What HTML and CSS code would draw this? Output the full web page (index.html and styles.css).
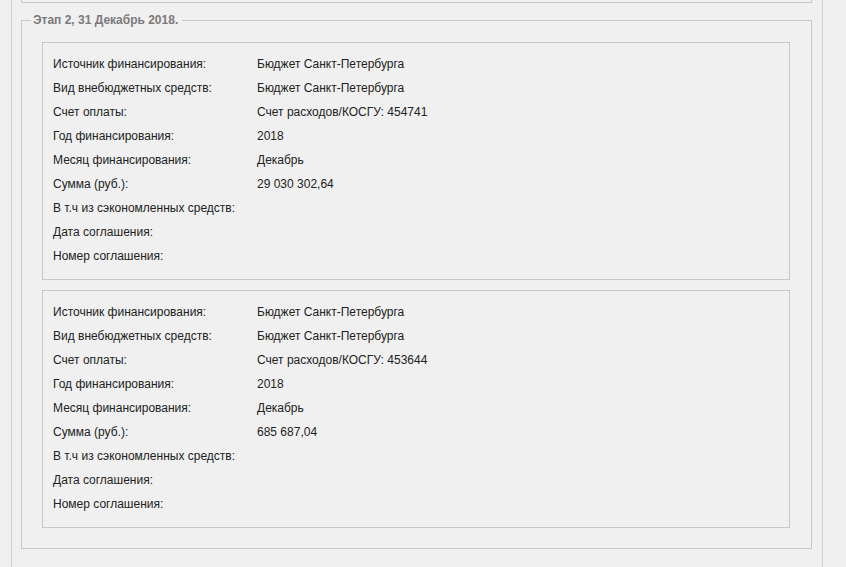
FILE: index.html
```html
<!DOCTYPE html>
<html>
<head>
<meta charset="utf-8">
<link rel="stylesheet" href="styles.css">
</head>
<body>
<div class="page">
  <div class="prev"></div>
  <div class="stage">
    <span class="legend">Этап 2, 31 Декабрь 2018.</span>
    <div class="card">
      <div class="row"><span class="lbl">Источник финансирования:</span><span class="val">Бюджет Санкт-Петербурга</span></div>
      <div class="row"><span class="lbl">Вид внебюджетных средств:</span><span class="val">Бюджет Санкт-Петербурга</span></div>
      <div class="row"><span class="lbl">Счет оплаты:</span><span class="val">Счет расходов/КОСГУ: 454741</span></div>
      <div class="row"><span class="lbl">Год финансирования:</span><span class="val">2018</span></div>
      <div class="row"><span class="lbl">Месяц финансирования:</span><span class="val">Декабрь</span></div>
      <div class="row"><span class="lbl">Сумма (руб.):</span><span class="val">29 030 302,64</span></div>
      <div class="row"><span class="lbl">В т.ч из сэкономленных средств:</span><span class="val"></span></div>
      <div class="row"><span class="lbl">Дата соглашения:</span><span class="val"></span></div>
      <div class="row"><span class="lbl">Номер соглашения:</span><span class="val"></span></div>
    </div>
    <div class="card">
      <div class="row"><span class="lbl">Источник финансирования:</span><span class="val">Бюджет Санкт-Петербурга</span></div>
      <div class="row"><span class="lbl">Вид внебюджетных средств:</span><span class="val">Бюджет Санкт-Петербурга</span></div>
      <div class="row"><span class="lbl">Счет оплаты:</span><span class="val">Счет расходов/КОСГУ: 453644</span></div>
      <div class="row"><span class="lbl">Год финансирования:</span><span class="val">2018</span></div>
      <div class="row"><span class="lbl">Месяц финансирования:</span><span class="val">Декабрь</span></div>
      <div class="row"><span class="lbl">Сумма (руб.):</span><span class="val">685 687,04</span></div>
      <div class="row"><span class="lbl">В т.ч из сэкономленных средств:</span><span class="val"></span></div>
      <div class="row"><span class="lbl">Дата соглашения:</span><span class="val"></span></div>
      <div class="row"><span class="lbl">Номер соглашения:</span><span class="val"></span></div>
    </div>
  </div>
</div>
</body>
</html>
```
FILE: styles.css
```css
html, body {
  margin: 0;
  padding: 0;
  background: #f0f0f0;
  height: 100%;
}
body {
  font-family: "Liberation Sans", Arial, sans-serif;
  font-size: 12px;
  color: #222;
}
.page {
  margin-left: 11px;
  width: 812px;
  min-height: 100%;
  box-sizing: border-box;
  border-left: 1px solid #d0d0d0;
  border-right: 1px solid #d0d0d0;
  padding: 0 10px 0 9px;
}
.prev {
  height: 2px;
  border: 1px solid #c8c8c8;
  border-top: none;
}
.stage {
  position: relative;
  margin-top: 17px;
  border: 1px solid #c8c8c8;
  padding: 21px 21px 20px 20px;
}
.legend {
  position: absolute;
  top: -8px;
  left: 9px;
  padding: 0 4px 0 2px;
  background: #f0f0f0;
  font-size: 12px;
  font-weight: bold;
  line-height: 14px;
  color: #7a7a7a;
}
.card {
  border: 1px solid #c8c8c8;
  padding: 9px 10px 11px 10px;
}
.card + .card {
  margin-top: 10px;
}
.row {
  display: flex;
  height: 24px;
  align-items: center;
}
.lbl {
  width: 204px;
  flex: none;
}
.val {
  flex: 1;
}
```
